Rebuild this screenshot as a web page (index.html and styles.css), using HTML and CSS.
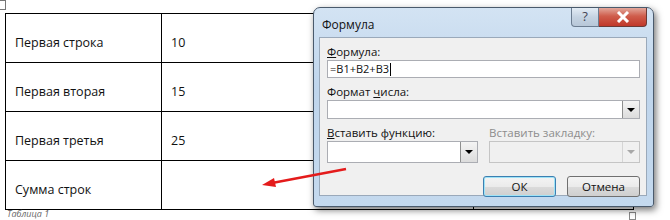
FILE: index.html
```html
<!DOCTYPE html>
<html lang="ru">
<head>
    <meta charset="UTF-8">
    <title>Формула</title>
    <link rel="stylesheet" href="styles.css">
</head>
<body>
    <div class="page">
        <span class="move-handle"></span>
        <table class="data-table">
            <tr><td class="col-name">Первая строка</td><td class="col-val">10</td><td class="col-rest"></td></tr>
            <tr><td class="col-name">Первая вторая</td><td class="col-val">15</td><td class="col-rest"></td></tr>
            <tr><td class="col-name">Первая третья</td><td class="col-val">25</td><td class="col-rest"></td></tr>
            <tr><td class="col-name">Сумма строк</td><td class="col-val"></td><td class="col-rest"></td></tr>
        </table>
        <div class="caption">Таблица 1</div>
        <span class="resize-handle"></span>
    </div>

    <div class="dialog">
        <div class="titlebar">
            <span class="title">Формула</span>
            <div class="caption-buttons">
                <span class="btn-help">?</span>
                <span class="btn-close">
                    <svg width="14" height="12" viewBox="0 0 14 12"><path d="M2 1 L12 11 M12 1 L2 11" stroke="#fff" stroke-width="3"/></svg>
                </span>
            </div>
        </div>
        <div class="client">
            <label class="lbl"><u>Ф</u>ормула:</label>
            <div class="textbox">=B1+B2+B3<span class="caret"></span></div>

            <label class="lbl">Формат <u>ч</u>исла:</label>
            <div class="combo wide">
                <span class="combo-arrow"><i class="tri"></i></span>
            </div>

            <div class="pair">
                <div class="pair-col left">
                    <label class="lbl"><u>В</u>ставить функцию:</label>
                    <div class="combo tall">
                        <span class="combo-arrow"><i class="tri"></i></span>
                    </div>
                </div>
                <div class="pair-col right">
                    <label class="lbl disabled">Вставить закладку:</label>
                    <div class="combo tall off">
                        <span class="combo-arrow"><i class="tri"></i></span>
                    </div>
                </div>
            </div>

            <div class="actions">
                <button class="btn default">ОК</button>
                <button class="btn">Отмена</button>
            </div>
        </div>
    </div>

    <svg class="arrow" width="90" height="30" viewBox="0 0 90 30">
        <path d="M86 4 L12 18" stroke="#e41b1b" stroke-width="2.5" fill="none"/>
        <path d="M2 20 L14 13 L16 22 Z" fill="#e41b1b"/>
    </svg>
</body>
</html>
```

FILE: styles.css
```css
body {
    margin: 0;
    background: #ffffff;
    font-family: "Open Sans", "DejaVu Sans", sans-serif;
    width: 670px;
    height: 220px;
    overflow: hidden;
    position: relative;
}
.page {
    padding: 13px 0 0 5px;
}
.move-handle {
    position: absolute;
    left: -2px;
    top: 0;
    width: 6px;
    height: 8px;
    border: 1px solid #777;
    background: #fff;
}
.data-table {
    border-collapse: collapse;
    font-size: 12.5px;
    color: #111;
}
.data-table td {
    border: 1px solid #000;
    height: 39px;
    padding: 9px 8px 0 9px;
    vertical-align: middle;
}
.col-name {
    width: 138px;
}
.col-val {
    width: 294px;
}
.col-rest {
    width: 142px;
}
.caption {
    font-size: 9px;
    line-height: 8px;
    font-style: italic;
    color: #666;
    padding: 0 0 0 2px;
}
.resize-handle {
    position: absolute;
    left: 629px;
    top: 212px;
    width: 5px;
    height: 6px;
    border: 1px solid #888;
    background: #fff;
}

/* dialog window */
.dialog {
    position: absolute;
    left: 313px;
    top: 7px;
    width: 339px;
    height: 198px;
    border: 1px solid #4a5a6c;
    border-radius: 7px 7px 3px 3px;
    background: linear-gradient(#d3e3f3, #bfd5ec 40%, #c4d9ee);
    box-shadow: 2px 3px 7px rgba(0, 0, 0, 0.55);
    font-size: 11.5px;
    color: #111;
}
.titlebar {
    height: 29px;
    display: flex;
    justify-content: space-between;
    padding-left: 8px;
}
.title {
    margin-top: 8px;
    font-size: 12px;
}
.caption-buttons {
    display: flex;
    margin-right: 6px;
    height: 19px;
}
.btn-help {
    width: 26px;
    border: 1px solid #6b7c90;
    border-top: none;
    border-radius: 0 0 0 4px;
    background: linear-gradient(#e3ecf5, #c5d3e2 50%, #b7c7d8);
    color: #445;
    text-align: center;
    font-size: 13px;
    line-height: 17px;
}
.btn-close {
    width: 47px;
    border: 1px solid #6b3a36;
    border-top: none;
    border-left: none;
    border-radius: 0 0 4px 0;
    background: linear-gradient(#e3a79b, #cf5d4c 45%, #c0382a);
    display: flex;
    align-items: center;
    justify-content: center;
}
.client {
    margin: 0 6px 0 5px;
    height: 159px;
    background: #f0f0f0;
    border: 1px solid #9aa9ba;
    padding: 0 6px 0 7px;
    box-sizing: border-box;
}
.lbl {
    display: block;
    height: 15px;
    line-height: 15px;
    margin-top: 6px;
    margin-bottom: 1px;
}
.lbl.disabled {
    color: #8d8d8d;
}
.textbox {
    height: 18px;
    border: 1px solid #abadb3;
    background: #fff;
    box-sizing: border-box;
    font-size: 11px;
    line-height: 16px;
    padding-left: 2px;
    display: flex;
    align-items: center;
}
.caret {
    display: inline-block;
    width: 1px;
    height: 13px;
    background: #000;
    margin-left: 1px;
}
.combo {
    height: 19px;
    border: 1px solid #abadb3;
    background: #fff;
    box-sizing: border-box;
    display: flex;
    justify-content: flex-end;
}
.combo.tall {
    height: 22px;
}
.combo.off {
    background: #f0f0f0;
    border-color: #c5c5c5;
}
.combo-arrow {
    width: 16px;
    border-left: 1px solid #8e8f8f;
    background: linear-gradient(#f4f4f4, #dcdcdc);
    display: flex;
    align-items: center;
    justify-content: center;
}
.combo.off .combo-arrow {
    background: #f0f0f0;
    border-left-color: #d5d5d5;
}
.tri {
    width: 0;
    height: 0;
    border-left: 4px solid transparent;
    border-right: 4px solid transparent;
    border-top: 4px solid #000;
}
.combo.off .tri {
    border-top-color: #a8a8a8;
}
.pair {
    display: flex;
    gap: 11px;
}
.pair-col.left {
    width: 151px;
}
.pair-col.right {
    flex: 1;
}
.actions {
    display: flex;
    justify-content: flex-end;
    gap: 11px;
    margin-top: 13px;
}
.btn {
    width: 73px;
    height: 21px;
    font-family: inherit;
    font-size: 11.5px;
    color: #111;
    border: 1px solid #707070;
    border-radius: 3px;
    background: linear-gradient(#f4f4f4, #ebebeb 50%, #dbdbdb 51%, #cfcfcf);
    padding: 0;
}
.btn.default {
    border-color: #3c7fb1;
    box-shadow: inset 0 0 0 1px #9ee3f7;
}

.arrow {
    position: absolute;
    left: 260px;
    top: 165px;
}
```
